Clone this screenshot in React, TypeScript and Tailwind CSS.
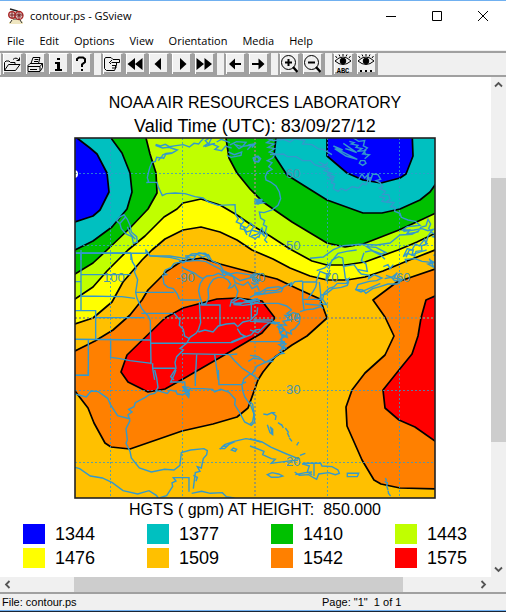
import type { ReactNode } from "react"

const menus = ["File", "Edit", "Options", "View", "Orientation", "Media", "Help"]

const levels = [
  { value: 1344, swatch: "bg-[#0000ff]" },
  { value: 1377, swatch: "bg-[#00c0c0]" },
  { value: 1410, swatch: "bg-[#00c000]" },
  { value: 1443, swatch: "bg-[#c0ff00]" },
  { value: 1476, swatch: "bg-[#ffff00]" },
  { value: 1509, swatch: "bg-[#ffc000]" },
  { value: 1542, swatch: "bg-[#ff8000]" },
  { value: 1575, swatch: "bg-[#ff0000]" },
]

// filled from the outside in, each one covers part of the one before
const contours = [
  { fill: "#ffff00", d: "M70 326L75 324 93 318 112 302 123 282 142 260 152 250 165 239 183 230 201 227 220 232 237 240 252 250 273 259 290 268 310 276 327 280 347 280 365 277 383 271 407 261 440 248V130H70Z" },
  { fill: "#c0ff00", d: "M70 302L75 299 93 287 107 271 118 260 128 250 145 236 164 217 177 209 183 203 201 199 220 205 237 215 250 224 270 236 290 249 312 261 327 265 345 265 365 262 398 250 417 242 440 231V130H70Z" },
  { fill: "#00c000", d: "M70 276L75 274 93 263 107 250 130 228 148 209 157 193 156 173 150 154 146 138 144 130H70Z" },
  { fill: "#00c0c0", d: "M70 252L75 250 93 241 112 227 127 209 132 192 130 173 122 153 111 138 107 130H70Z" },
  { fill: "#0000ff", d: "M70 224L75 222 93 216 100 210 109 192 107 173 97 154 90 148 77 138 70 130Z" },
  { fill: "#00c000", d: "M226 130V138L229 158 237 173 250 189 263 202 292 222 327 243 345 247 363 244 399 230 423 219 440 211V130Z" },
  { fill: "#00c0c0", d: "M276 130V138L274 155 287 175 327 200 363 213 382 213 400 209 420 200 430 192 440 178V130Z" },
  { fill: "#0000ff", d: "M327 130V156L347 173 363 180 381 183 400 178 406 174 413 156 412 130Z" },
  { fill: "#ff8000", d: "M70 353L75 351 95 341 113 330 130 315 142 300 148 290 167 271 182 261 202 258 220 264 250 272 277 279 298 289 320 299 327 318 307 336 292 345 275 357 263 372 258 380 248 408 237 417 213 424 182 431 130 449 111 447 105 443 94 423 88 408 75 391 70 385Z" },
  { fill: "#ff0000", d: "M121 372L127 355 165 318 183 308 217 299 237 298 262 301 275 318 262 333 250 340 233 350 183 379 165 389 148 392 128 382Z" },
  { fill: "#ff8000", d: "M440 267L435 269 397 282 373 300 385 317 394 336 385 355 365 373 352 390 346 407 347 426 362 460 374 480 381 484 400 488 440 489Z" },
  { fill: "#ff0000", d: "M440 294L435 296 426 300 421 318 418 336 412 354 399 370 383 390 385 408 399 420 415 427 435 441 440 444Z" },
]

// coastlines and borders, digitised per sheet at three units to the point
const coasts = [
  {
    sheet: "translate(70 130) scale(.3333)",
    d: "M257 43l15 5 14 -5 12 7 20 -3 22 -3 18 7 14 -11 14 2 8 -10 8 -8M256 46l22 8 18 -2 26 8 -14 8 -20 2 -10 5 -4 9 -14 -2 -4 12 -10 3 -6 14 -4 14 -4 18 4 13 -7 2 8 -1 h24l4 14 12 26 12 -6 26 -2 30 2 30 9 24 4 16 12 30 10 50 -2 2 30 8 12 -6 10 14 6 -2 14 12 3 8 16 M265 92l8 -10 8 3 6 -12 18 -3 14 -8 M512 262l10 12 -10 12 18 8 12 -14 10 10 -8 10 22 6 M520 290l10 16 14 -4 -6 16 18 8 10 -8 M400 50l14 -10 -8 -8 12 -8 M405 50l22 -8 18 8 -10 8 20 4 12 -14 18 6 M425 24l-10 20 20 -4 M440 36l14 -8 26 10 M480 45l20 -10 28 2 -10 12 28 -4 -14 14 M475 66l18 8 22 -8 -2 10 -30 6 -12 -6M550 85l10 -6 8 8 -4 8 -12 -2ZM556 208l16 4 -14 4 14 3 -10 4 M555 42l-15 2 10 4ZM495 44l22 6 -10 6ZM140 272l8 -10 14 -8 10 14 8 18 4 20 16 14 2 16 -12 4 -4 -20 -18 -8 -14 -16 -4 -14Z M150 280l16 -18 M172 290l8 20 16 18M15 370H228V362L240 378 300 378 345 385 365 372 405 370 420 380 M33 370V390M183 370V390",
  },
  {
    sheet: "translate(250 130) scale(.3333)",
    d: "M50 24l20 8 30 -4 20 8 14 -10 30 6 -6 10 28 2 18 12 16 2 26 16 M60 74l40 -2 12 8 26 0 20 12 24 0 12 12 18 6 20 -8 M206 96l20 10 -10 4 20 6 -14 6 22 8 -12 6 18 10 -6 12 10 4 -4 14 14 8 10 -8 14 6 18 -12 20 4 12 -14 10 4 8 -20 4 12 8 -24 16 2 8 14 -14 4 12 6 8 12 -10 4 18 10 -8 10 18 0 4 14 -12 8 24 2 -10 12 14 2 -2 12 16 6 4 12 20 8 22 4 14 12 -18 2 -20 2 -14 10 24 0 -22 4 32 -4 24 -4 18 6 16 -4 -8 8 16 8 -10 6 14 4 -6 14 12 4 -10 20 8 10 -16 4M250 48l28 12 -20 -4 40 20 24 12 -34 -10 -34 -22M280 40l40 28 -20 -8 -14 -4M298 34l14 4 -8 4 20 4 -6 6 18 4 -14 8 24 -2 -8 10 20 2 -14 12 M310 24l16 10 18 -2 -4 16 12 6 -10 8 6 14 M332 92l12 0 4 8 -10 6 -10 -6Z M0 45l12 -2 -6 10 M10 84l14 -6 8 8 -6 10 -12 -2ZM72 24l-22 14 22 4 -18 10 20 4 -16 10 18 6 -8 12 -16 8 14 6 -10 12 10 8 -14 8 -6 14 2 10 14 6 16 12 10 18 4 20 -8 20 -18 14 -24 8 -14 -2 4 18 12 8 -4 12 10 6 -4 16 6 10 -8 14 8 8M326 148l10 -16 8 12 12 -12 -4 14 14 -4 M236 134l16 6 -14 8 14 4 M388 200l16 4 -8 10 18 4 M12 214l24 -6 -20 0 26 10 -28 4 24 -14M4 318l20 -6 12 -18 8 26 -12 -14 -6 18M180 385l40 -4 30 -22 30 -12 50 -4 50 2 40 -6 30 -24 36 -2 20 -10 M350 350l28 2 30 16 -14 4 -26 -10ZM345 366l20 -4 28 14 12 12M480 300l-10 12 34 -6 8 -14 16 -4 6 -20 8 14 -6 14 8 8 -10 14 -6 24 -4 -14 -16 20 -12 -6 -10 18 -14 -4 -12 24 12 -10 22 8 4 -14 18 -2 -2 -14 20 -8",
  },
  {
    sheet: "translate(70 250) scale(.3333)",
    d: "M228 0L240 17 268 20 300 22 325 28 342 38 354 22 370 28 380 12 398 22 415 14 425 32 450 44 460 62 480 72 500 68 550 76 570 70M345 18l30 -2 12 -8 20 6 10 14 M342 35l40 -4 26 4 22 12 20 10 10 16M312 40l-8 12 -18 8 -4 8 8 6 -12 2 4 26 12 10 16 4 12 16 6 16M312 40l30 -6M335 52l30 14 10 4 12 10 12 6 12 -8 20 -2 14 -6 18 8 16 -10M400 86l-10 16 -4 20 4 20 6 16 -2 6 14 -4 8 -16 -2 -26 6 -16 10 -14 14 -6 16 0 14 8 8 12 -6 12 10 -2 8 -8 10 20 -6 20 -14 8 -4 18 M452 60l20 14 18 6 6 18 24 8 14 -10 12 20 16 -8 6 14M480 72l30 20 36 -10 20 20M490 155l20 -10 24 8 30 -8M484 156l22 8 18 -8 46 -6M490 164l30 2 30 -4 20 -8 M490 160l60 -4M15 9H183M33 0V182M15 95H33M33 74H183M33 138L155 140 195 145M15 182H77V268M77 203H222M15 268L240 270M55 268V376H15M122 268V322L145 325 180 332 245 340M183 9l4 26 12 20 -6 10 10 24 -6 38 4 18 14 30 20 24 6 14 2 130M197 127H312M214 190H308M240 280H350M330 150H388M388 156L392 218 385 240 378 250 360 262 350 280 330 295 340 300 320 320 315 338 318 355 302 380 312 390M312 190l18 20 -2 16 12 12 4 20 14 8M450 166V226M395 165H452M385 246l20 -6 24 6 16 -18 24 -6 24 -2 10 10 16 -14 20 -4 22 -20 2 -20M544 160V210M502 236l10 16 16 8 16 -6 12 -14 14 -2M350 278H486L528 260M335 311L480 314 502 312M478 314l16 18 22 22 30 20 20 14M380 314L376 390M434 314L445 390M248 355H315M248 340V355L254 390M535 334l16 -10 20 4M484 276l44 -18",
  },
  {
    sheet: "translate(250 250) scale(.3333)",
    d: "M0 142l24 -12 14 2 10 -10 30 0 18 -8 -10 -4 -34 4 -20 12 -20 4M0 160H85L110 168 125 180M20 135l40 -6 34 -4 6 -14 24 -12 -4 12 14 -16 24 -2M0 214L90 218M10 210l60 0M0 80l16 -6 -8 12 22 4 -16 14 -10 -6M0 155l25 -4 M0 240l24 8 20 -20 14 -10 20 4M158 96V146L162 180M158 96H198L210 64 230 72 228 92 240 60M175 145l14 -20 8 -14 4 -16M160 148H210M208 96L214 150 210 160 230 164 218 148 222 130 236 116 252 110 262 100 290 100 296 86 286 92M200 62l24 -8 16 -14 24 -30 26 -6 30 -4M236 58l10 -28 20 -10 12 4 8 60 10 12 -4 10 -18 6 -26 4 -20 16 -16 4 -2 14M165 162l46 4 8 10 M150 185l20 -6 20 -2 24 -8M278 50l34 -6 10 14 30 6 -4 -22 -14 -10 8 -24M322 60l12 12 24 4 -2 10 16 -12 24 10 -16 8 -22 2 -34 10 -6 14 20 2 10 10 20 -14 22 -6 24 -8 28 0 14 -12 -22 2 -10 -10 -20 4M315 118l18 8 18 -8 40 -18M408 76l18 6 16 -14 -10 16 24 4M400 50l14 -6 6 12 10 -12M470 40l-4 -12 30 -2 20 8 34 4M468 22l10 -22 12 0 -4 14 30 -10 14 -4M540 30l14 8 -20 4 18 10 -14 -26ZM125 180l-14 10 12 6 -18 0 14 14 -20 4 10 12 -18 -2 14 16 -16 8 14 12 -12 8 14 12 -18 4 16 10 -14 8 12 8 -14 2 -16 12 -26 14 -24 10 -16 26M110 196l20 -8 14 4 -6 14 12 -4 -2 18 -14 16 -12 6 2 10 -16 -6 4 16 -12 -4M68 214l24 12 -6 10 10 24 -4 26M80 230l20 8 -8 14 16 6M90 236l-6 -10M0 275H105M0 316L24 320 46 336 70 334M96 278l12 4 -12 8 14 4M94 296l8 -6 2 10",
  },
  {
    sheet: "translate(70 370) scale(.3333)",
    d: "M15 72l34 9 14 -18 22 2 28 20 8 18 22 34 38 10 M180 152l-6 -18 12 -8 -10 -8 16 -8 4 -12 30 -16 12 -8 16 -4 8 -8 30 8 8 -10 18 4 4 8 16 2 8 -4 10 12 2 -12 -18 -8 12 -4 -14 -8 20 2 M340 54l10 16 -6 -20 10 14 8 -10 -10 22 M362 56h36l30 2 6 8 18 -8 24 8 20 22 -2 16 14 22 16 30 20 10 10 -10 -2 -24 -10 -26 -18 -26 -6 -18 -2 -18 6 -18 20 -16M180 152l-12 24 4 34 -4 10 12 24 4 20 24 30 36 12 40 -8 28 2 18 -14 4 -38 28 -8 40 -4 10 6 -2 12 -10 12 -6 28 -12 -4 8 14 -14 4 -6 48M15 292l14 4 32 22 36 6 30 14 32 24 44 10 34 -10 22 14 12 16M270 383l20 -6 18 -28 -2 -10 12 -6 -8 -10H357V365M365 370l30 -6 26 6 36 -2 12 12 24 4M370 316l12 6 -4 12 M254 0l6 24 4 28 -6 10M318 0l-8 20 -8 16H344L346 54M376 0V48M445 0L447 44 510 44 528 36M15 16H55V0M450 238l14 -14 28 -10 36 -8 24 4 20 6M448 236l16 0 12 -12 20 -10 M484 240l6 -6 10 4 -4 6ZM455 230l16 -2",
  },
  {
    sheet: "translate(250 370) scale(.3333)",
    d: "M0 206l36 10 28 16 46 20 40 16M0 228l16 6 26 10 -4 10 26 12 12 2 -12 12 44 -6 36 -4 M0 95l8 8 4 30 -4 22 -8 8M40 132l12 2 14 -6 12 10 -2 12M62 128l14 0M52 164l8 24 8 6 0 -16 -8 -8M62 172l4 18M84 158l12 8 M94 162l6 12M106 174l10 14M112 188l6 14M118 204l8 10M140 226l6 -10M150 256l16 -6M52 314l14 -6 20 4 12 6 -14 4 -20 0ZM134 306l14 10 28 -2 16 10 8 4 6 -16 30 -4 20 6 12 -4 -4 -10 -18 -10 -30 -2 -4 -8H168l-12 2 M160 282l18 6 -6 18 14 8M136 314l30 -6 20 -2M192 282V318M292 310h34l-4 10h-30ZM406 324l4 8M404 334l8 4 -2 14M410 346l4 14M414 368l8 10 M414 362l2 8",
  },
]

const mapLabels = [
  { x: 103, y: 282, text: "100" },
  { x: 176, y: 282, text: "-90" },
  { x: 251, y: 282, text: "80" },
  { x: 324, y: 282, text: "70" },
  { x: 396, y: 282, text: "60" },
  { x: 286, y: 178, text: "60" },
  { x: 286, y: 250, text: "50" },
  { x: 286, y: 322, text: "40" },
  { x: 286, y: 394, text: "30" },
  { x: 286, y: 466, text: "20" },
]

function ContourMap() {
  return (
    <svg viewBox="74 137 362 362" className="block w-full max-w-[362px]" role="img" aria-label="Contour map">
      <rect x="75" y="138" width="360" height="360" fill="#ffc000" />
      <clipPath id="frame">
        <rect x="75" y="138" width="360" height="360" />
      </clipPath>
      <g clipPath="url(#frame)">
        <g stroke="#000" strokeWidth="1.7" strokeLinejoin="round">
          {contours.map((c) => (
            <path key={c.d} d={c.d} fill={c.fill} />
          ))}
        </g>
        <circle cx="74" cy="174" r="4" fill="#fff" />
        <g stroke="#3399cc" strokeOpacity=".8" fill="none">
          <path strokeDasharray="2 2" d="M110.500 138V498M182.500 138V498M327.500 138V498M399.500 138V498M75 173.500H435M75 245.500H435M75 390.500H435M75 462.500H435" />
          <path strokeDasharray="2 2" strokeWidth="2" stroke="#909070" d="M255 138V498M75 318H435" />
        </g>
        {coasts.map((c) => (
          <path key={c.sheet} d={c.d} transform={c.sheet} fill="none" stroke="#3399cc" strokeWidth="4.2" />
        ))}
        <g fill="#4a94a8" fontSize="13" fontFamily="Liberation Sans, sans-serif">
          {mapLabels.map((l) => (
            <text key={l.text + l.x} x={l.x} y={l.y}>
              {l.text}
            </text>
          ))}
        </g>
      </g>
      <rect x="75" y="138" width="360" height="360" fill="none" stroke="#222" strokeWidth="1.6" />
    </svg>
  )
}

function Tool({ label, children }: { label: string; children: ReactNode }) {
  return (
    <button
      aria-label={label}
      className="h-full w-[23px] shrink-0 border-t border-r-[3px] border-b-[3px] border-l-2 border-t-white border-r-[#a0a0a0] border-b-[#a0a0a0] border-l-[#a0a0a0] bg-[#f0f0f0]"
    >
      <svg viewBox="0 0 18 20" className="block h-5 w-[18px]" fill="none" stroke="#000">
        <path d="M.5 0V20" stroke="#fff" />
        {children}
      </svg>
    </button>
  )
}

function Gap() {
  return <span className="w-2 shrink-0 border-l border-[#a0a0a0] bg-[#f0f0f0]" />
}

function Eye() {
  return (
    <>
      <path d="M1 7Q9 -1 17 7Q9 14 1 7Z" />
      <circle cx="9" cy="7" r="2.800" fill="#000" />
      <path d="M3 4L1.500 2M6 2.500L5 .5M9 2V0M12 2.500L13 .5M15 4L16.500 2" />
    </>
  )
}

function Magnifier() {
  return (
    <>
      <circle cx="8.500" cy="8.500" r="7" />
      <path d="M13 13L17.500 18" strokeWidth="2.400" />
    </>
  )
}

function Toolbar() {
  return (
    <div className="flex h-[26px] shrink-0 border-y-2 border-t-[#a0a0a0] border-b-[#a0a0a0] bg-[#f0f0f0] pl-px">
      <Tool label="Open">
        <path d="M1.500 16.500V8.500L3 7H6L7.500 8.500H12V10.500M1.500 16.500L5.500 10.500H17L12.500 16.500ZM10 5.500Q13 2.500 16 6M16.500 3.500V6.500H13.500" />
      </Tool>
      <Tool label="Print">
        <path d="M5 9.500L7 3.500H14L12.500 9.500M8.500 5.500H12.500M8 7.500H12M2 11.500L4 9.500H16.500V13.500L14 17.500H2ZM2 12.500H14V17M14 12.500L16.500 9.500M4 15.500H11" />
      </Tool>
      <Tool label="Information">
        <path d="M8 4H11V6H8ZM6 8H11V15H13V17H6V15H8V10H6Z" fill="#000" stroke="none" />
      </Tool>
      <Tool label="Help">
        <path d="M5 7V5L7 3.500H11L13 5V8L10 10.500V13" strokeWidth="2" />
        <path d="M9 15H11V17H9Z" fill="#000" stroke="none" />
      </Tool>
      <Gap />
      <Tool label="Go to page">
        <path d="M2.500 3.500H8L10 5.500H16.500V8.500H9M2.500 3.500L1.500 5V14.500L3.500 16.500H11.500L12.500 14V12M8.500 8.500L7 10M13.500 8.500V11.500H9M13 11.500V14H9M9 6L6 9" />
      </Tool>
      <Tool label="Back five pages">
        <path d="M1.500 10L9 4V16ZM9 10L16.500 4V16Z" fill="#000" stroke="none" />
      </Tool>
      <Tool label="Previous page">
        <path d="M5.500 10L12 4V16Z" fill="#000" stroke="none" />
      </Tool>
      <Tool label="Next page">
        <path d="M14.500 10L8 4V16Z" fill="#000" stroke="none" />
      </Tool>
      <Tool label="Forward five pages">
        <path d="M9 10L1.500 4V16ZM17 10L9.500 4V16Z" fill="#000" stroke="none" />
      </Tool>
      <Gap />
      <Tool label="Go back">
        <path d="M3 10L9 4.500V9H15V11H9V15.500Z" fill="#000" stroke="none" />
      </Tool>
      <Tool label="Go forward">
        <path d="M15.500 10L9.500 4.500V9H3V11H9.500V15.500Z" fill="#000" stroke="none" />
      </Tool>
      <Gap />
      <Tool label="Zoom in">
        <Magnifier />
        <path d="M5 8.500H12M8.500 5V12" strokeWidth="2" />
      </Tool>
      <Tool label="Zoom out">
        <Magnifier />
        <path d="M5 8.500H12" strokeWidth="2" />
      </Tool>
      <Gap />
      <Tool label="Text find">
        <Eye />
        <text x="9" y="19" textAnchor="middle" fontSize="7" fontFamily="Liberation Mono, monospace" fontWeight="bold" fill="#000" stroke="none">
          ABC
        </text>
      </Tool>
      <Tool label="Text find next">
        <Eye />
        <path d="M3 17H5M8 17H10M13 17H15" strokeWidth="2" />
      </Tool>
    </div>
  )
}

function Chevron({ d, label }: { d: string; label: string }) {
  return (
    <button aria-label={label} className="flex h-[15px] w-[15px] shrink-0 items-center justify-center">
      <svg viewBox="0 0 9 9" className="h-[9px] w-[9px]" fill="none" stroke="#555" strokeWidth="1.800">
        <path d={d} />
      </svg>
    </button>
  )
}

export default function App() {
  return (
    <div className="flex h-screen flex-col overflow-hidden bg-white font-['Open_Sans',sans-serif] text-black">
      <header className="flex h-[31px] shrink-0 items-center border-t border-[#70b0f0] pl-2">
        <svg viewBox="0 0 16 16" className="mr-1.5 h-4 w-4" fill="none">
          <path d="M2 1L9 3 12 5" stroke="#222" strokeWidth="1.500" />
          <path d="M2 14L4 11H12L15 14V16H1V14Z" fill="#efe6c0" />
          <path d="M4 12L2 15M12 12L14 15M5 11H11" stroke="#333" />
          <circle cx="4" cy="7" r="3.300" fill="#dfc3c3" stroke="#a22" strokeWidth="1.300" />
          <circle cx="11" cy="7.500" r="4" fill="#dfc3c3" stroke="#a22" strokeWidth="1.300" />
          <path d="M1.500 7H15M4 4V10M11 4V11M9 5.500L13 9.500M9 9.500L13 5.500" stroke="#722" />
        </svg>
        <h1 className="text-[11px] leading-4">contour.ps - GSview</h1>
        <div className="ml-auto flex h-full">
          <button aria-label="Minimize" className="flex w-[46px] items-center justify-center">
            <svg viewBox="0 0 10 10" className="h-2.5 w-2.5" stroke="#000"><path d="M0 5.500H10" /></svg>
          </button>
          <button aria-label="Maximize" className="flex w-[46px] items-center justify-center">
            <svg viewBox="0 0 10 10" className="h-2.5 w-2.5" stroke="#000" fill="none"><path d="M.5 .5H9.500V9.500H.5Z" /></svg>
          </button>
          <button aria-label="Close" className="flex w-[46px] items-center justify-center">
            <svg viewBox="0 0 10 10" className="h-2.5 w-2.5" stroke="#000"><path d="M0 0L10 10M10 0L0 10" /></svg>
          </button>
        </div>
      </header>
      <nav className="flex h-5 shrink-0 items-center gap-[15px] border-b border-[#f0f0f0] px-[7px] text-[11px] leading-4">
        {menus.map((m) => (
          <button key={m}>{m}</button>
        ))}
      </nav>
      <Toolbar />
      <div className="flex min-h-0 flex-1">
        <main className="flex min-w-0 flex-1 flex-col overflow-hidden font-['Liberation_Sans',sans-serif]">
          <div className="flex flex-col items-center pt-3.5 pl-[19px] whitespace-pre">
            <h2 className="text-[16px] leading-6">NOAA AIR RESOURCES LABORATORY</h2>
            <p className="text-[18px] leading-[22px]">Valid Time (UTC): 83/09/27/12</p>
            <ContourMap />
            <p className="text-[16px] leading-[22px]">HGTS ( gpm) AT HEIGHT:  850.000</p>
          </div>
          <ul className="grid grid-cols-[repeat(4,auto)] justify-between gap-y-1 pt-[3px] pr-6 pl-[23px] text-[18px] leading-5">
            {levels.map((l) => (
              <li key={l.value} className="flex items-center gap-2.5">
                <span className={`h-5 w-[22px] ${l.swatch}`} />
                {l.value}
              </li>
            ))}
          </ul>
        </main>
        <div className="flex w-[15px] shrink-0 flex-col bg-[#f0f0f0]">
          <Chevron label="Scroll up" d="M1 6.500L4.500 3 8 6.500" />
          <div className="flex flex-1 flex-col">
            <span className="flex-[86]" />
            <span className="flex-[264] bg-[#cdcdcd]" />
            <span className="flex-[120]" />
          </div>
          <Chevron label="Scroll down" d="M1 2.500L4.500 6 8 2.500" />
        </div>
      </div>
      <div className="flex h-[15px] shrink-0 bg-[#f0f0f0] pr-[15px]">
        <Chevron label="Scroll left" d="M6.500 1L3 4.500 6.500 8" />
        <div className="flex flex-1">
          <span className="flex-[59]" />
          <span className="flex-[329] bg-[#cdcdcd]" />
          <span className="flex-[73]" />
        </div>
        <Chevron label="Scroll right" d="M2.500 1L6 4.500 2.500 8" />
      </div>
      <footer className="flex h-[19px] shrink-0 items-center border-t-2 border-b border-t-[#a0a0a0] border-b-[#70b0f0] bg-[#f0f0f0] pl-0.5 font-['Liberation_Sans',sans-serif] text-[11px] leading-4 whitespace-pre">
        <span className="w-8/12 max-w-80">File: contour.ps</span>
        <span>Page: "1"  1 of 1</span>
      </footer>
      <div className="h-px shrink-0 bg-[#1a2535]" />
    </div>
  )
}
